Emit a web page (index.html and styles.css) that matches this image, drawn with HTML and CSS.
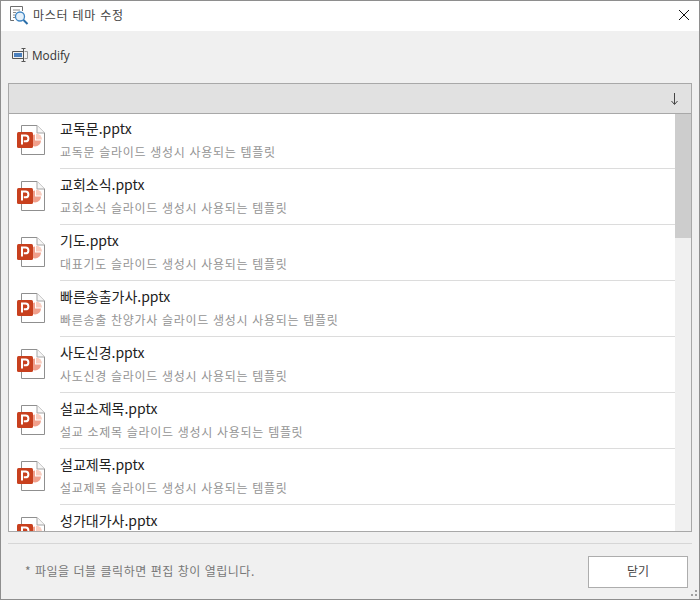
FILE: index.html
```html
<!DOCTYPE html>
<html lang="ko">
<head>
<meta charset="utf-8">
<title>마스터 테마 수정</title>
<link rel="stylesheet" href="styles.css">
</head>
<body>
<svg class="defs" width="0" height="0">
  <symbol id="ppt" viewBox="0 0 32 32">
    <path d="M4.500 .500H20L27.500 8V29.500H4.500Z" fill="#fff" stroke="#8f8f8f"/>
    <path d="M20 .500V8H27.500" fill="#f6f6f6" stroke="#a5a5a5"/>
    <path d="M18 9.500a6 6 0 1 0 6 6h-6z" fill="#f0a08c"/>
    <path d="M19 8.500v6h6a6 6 0 0 0-6-6z" fill="#f9cdbf"/>
    <rect x="0" y="7" width="16" height="16" rx="1.500" fill="#c8401e"/>
    <path d="M5 19.500V10.500H8.500a2.800 2.800 0 0 1 0 5.800H6.800" fill="none" stroke="#fff" stroke-width="2"/>
  </symbol>
</svg>
<div class="window">
  <header class="titlebar">
    <svg class="title-icon" width="20" height="20" viewBox="0 0 20 20">
      <path d="M1.500 1.500H13.500V6M1.500 1.500V15.500H5" fill="none" stroke="#6e6e6e"/>
      <path d="M4 5H11M4 7.500H7M4 10H6M4 12.500H6" stroke="#8a8a8a"/>
      <circle cx="11" cy="11.500" r="4.500" fill="#e4f0fa" stroke="#3f86c4" stroke-width="1.300"/>
      <path d="M14.500 15L18.500 19" stroke="#2a6ea8" stroke-width="2"/>
    </svg>
    <span class="title-text">마스터 테마 수정</span>
    <svg class="close" width="14" height="14" viewBox="0 0 14 14"><path d="M2 2L12 12M12 2L2 12" stroke="#111" stroke-width="1"/></svg>
  </header>
  <div class="toolbar">
    <svg width="17" height="14" viewBox="0 0 17 14">
      <path d="M11 3.500H.5V10.500H11" fill="none" stroke="#555"/>
      <path d="M12.500 3.500H15.500V10.500H12.500" fill="none" stroke="#999"/>
      <rect x="2" y="5" width="8" height="4" fill="#4a7fbd"/>
      <path d="M11.500 1V13M9.500 .5H13.500M9.500 13.500H13.500" stroke="#555"/>
    </svg>
    <span class="toolbar-label">Modify</span>
  </div>
  <section class="panel">
    <div class="panel-head">
      <svg class="arrow" width="7" height="12" viewBox="0 0 7 12"><path d="M3.500 0V11M.5 8L3.500 11.500L6.500 8" fill="none" stroke="#444"/></svg>
    </div>
    <div class="panel-body">
      <ul class="list">
        <li class="item"><svg class="file" width="32" height="32"><use href="#ppt"/></svg><div class="info"><div class="name">교독문.pptx</div><div class="desc">교독문 슬라이드 생성시 사용되는 템플릿</div></div></li>
        <li class="item"><svg class="file" width="32" height="32"><use href="#ppt"/></svg><div class="info"><div class="name">교회소식.pptx</div><div class="desc">교회소식 슬라이드 생성시 사용되는 템플릿</div></div></li>
        <li class="item"><svg class="file" width="32" height="32"><use href="#ppt"/></svg><div class="info"><div class="name">기도.pptx</div><div class="desc">대표기도 슬라이드 생성시 사용되는 템플릿</div></div></li>
        <li class="item"><svg class="file" width="32" height="32"><use href="#ppt"/></svg><div class="info"><div class="name">빠른송출가사.pptx</div><div class="desc">빠른송출 찬양가사 슬라이드 생성시 사용되는 템플릿</div></div></li>
        <li class="item"><svg class="file" width="32" height="32"><use href="#ppt"/></svg><div class="info"><div class="name">사도신경.pptx</div><div class="desc">사도신경 슬라이드 생성시 사용되는 템플릿</div></div></li>
        <li class="item"><svg class="file" width="32" height="32"><use href="#ppt"/></svg><div class="info"><div class="name">설교소제목.pptx</div><div class="desc">설교 소제목 슬라이드 생성시 사용되는 템플릿</div></div></li>
        <li class="item"><svg class="file" width="32" height="32"><use href="#ppt"/></svg><div class="info"><div class="name">설교제목.pptx</div><div class="desc">설교제목 슬라이드 생성시 사용되는 템플릿</div></div></li>
        <li class="item"><svg class="file" width="32" height="32"><use href="#ppt"/></svg><div class="info"><div class="name">성가대가사.pptx</div></div></li>
      </ul>
      <div class="scrollbar"><div class="thumb"></div></div>
    </div>
  </section>
  <div class="divider"></div>
  <footer class="footer">
    <span class="hint">* 파일을 더블 클릭하면 편집 창이 열립니다.</span>
    <button class="btn">닫기</button>
  </footer>
  <svg class="grip" width="10" height="10" viewBox="0 0 10 10"><path d="M6 1h2v2H6zM2 5h2v2H2zM6 5h2v2H6z" fill="#a0a0a0"/></svg>
</div>
</body>
</html>
```

FILE: styles.css
```css
* { box-sizing: border-box; }
html, body { margin: 0; padding: 0; }
body { width: 700px; height: 600px; overflow: hidden; font-family: "Noto Sans CJK KR", "Noto Sans", sans-serif; }
.defs { position: absolute; }
.window { position: relative; width: 700px; height: 600px; background: #f0f0f0; border: 1px solid #8e8e8e; display: flex; flex-direction: column; }
.titlebar { height: 30px; background: #fff; display: flex; align-items: center; padding: 0 8px 2px 8px; flex: none; }
.title-icon { flex: none; }
.title-text { margin-left: 4px; font-size: 12px; color: #444; letter-spacing: .75px; line-height: 28px; flex: 1; }
.toolbar { height: 52px; display: flex; align-items: center; padding: 0 0 4px 11px; flex: none; }
.toolbar-label { margin-left: 3px; font-family: "Open Sans", sans-serif; font-size: 11.800px; color: #333; }
.panel { margin: 0 7px; width: 684px; height: 449px; border: 1px solid #a8a8a8; display: flex; flex-direction: column; flex: none; background: #fff; }
.panel-head { height: 30px; background: #e1e1e1; border-bottom: 1px solid #a8a8a8; display: flex; justify-content: flex-end; align-items: center; padding-right: 13px; flex: none; }
.arrow { flex: none; }
.panel-body { flex: 1; min-height: 0; display: flex; }
.list { list-style: none; margin: 0; padding: 0; flex: 1; overflow: hidden; }
.item { height: 56px; display: flex; padding-left: 8px; }
.file { flex: none; margin-top: 11px; }
.info { flex: 1; margin-left: 11px; border-bottom: 1px solid #dcdcdc; padding-top: 3px; height: 55px; }
.name { font-size: 14px; line-height: 22px; color: #222; }
.desc { font-size: 12px; line-height: 20px; margin-top: 3px; color: #949494; letter-spacing: .7px; }
.scrollbar { width: 16px; background: #f0f0f0; flex: none; }
.thumb { height: 124px; background: #cdcdcd; }
.divider { margin: 11px 7px 0; height: 1px; background: #d6d6d6; flex: none; }
.footer { flex: 1; display: flex; justify-content: space-between; align-items: flex-start; padding: 12px 11px 0 24px; }
.hint { font-size: 12px; line-height: 30px; color: #777; letter-spacing: .52px; }
.btn { width: 100px; height: 32px; background: #fff; border: 1px solid #adadad; font-family: inherit; font-size: 12px; line-height: 26px; color: #444; padding: 0 0 3px; }
.close { flex: none; }
.grip { position: absolute; right: 0; bottom: 0; }
```
